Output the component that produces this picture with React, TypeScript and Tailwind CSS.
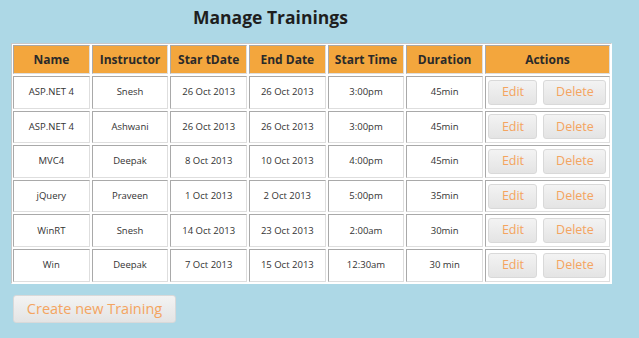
const TRAININGS = [
  { name: "ASP.NET 4", instructor: "Snesh", start: "26 Oct 2013", end: "26 Oct 2013", time: "3:00pm", duration: "45min" },
  { name: "ASP.NET 4", instructor: "Ashwani", start: "26 Oct 2013", end: "26 Oct 2013", time: "3:00pm", duration: "45min" },
  { name: "MVC4", instructor: "Deepak", start: "8 Oct 2013", end: "10 Oct 2013", time: "4:00pm", duration: "45min" },
  { name: "jQuery", instructor: "Praveen", start: "1 Oct 2013", end: "2 Oct 2013", time: "5:00pm", duration: "35min" },
  { name: "WinRT", instructor: "Snesh", start: "14 Oct 2013", end: "23 Oct 2013", time: "2:00am", duration: "30min" },
  { name: "Win", instructor: "Deepak", start: "7 Oct 2013", end: "15 Oct 2013", time: "12:30am", duration: "30 min" },
];

const HEADERS = ["Name", "Instructor", "Star tDate", "End Date", "Start Time", "Duration", "Actions"];

const cell =
  "flex items-center justify-center border border-t-[#a9a9a9] border-l-[#a9a9a9] border-b-[#dedede] border-r-[#dedede]";

function GreyButton({ label, className = "" }: { label: string; className?: string }) {
  return (
    <button
      type="button"
      className={`rounded-[3px] border border-[#d9d9d9] bg-gradient-to-b from-[#f3f3f3] to-[#e4e4e4] text-[#f4a460] ${className}`}
    >
      {label}
    </button>
  );
}

export default function App() {
  return (
    <div className="min-h-screen bg-[#add8e6] pl-[11px] font-['Open_Sans',sans-serif]">
      {/* Title */}
      <h1 className="ml-[182px] pt-[7px] text-[17.5px] font-bold leading-[20px] text-[#1e1e1e]">
        Manage Trainings
      </h1>

      {/* Table */}
      <div className="mt-[16px] grid w-[601px] grid-cols-[repeat(6,1fr)_125px] gap-[2px] border border-t-[#c8c8c8] border-l-[#c8c8c8] border-b-white border-r-white bg-white p-[1px]">
        {HEADERS.map((h) => (
          <div key={h} className={`${cell} h-[29px] bg-[#f3a63d] text-[12px] font-bold text-[#2a2a2a]`}>
            {h}
          </div>
        ))}
        {TRAININGS.map((t, i) => (
          <div key={i} className="contents">
            {[t.name, t.instructor, t.start, t.end, t.time, t.duration].map((v, j) => (
              <div key={j} className={`${cell} h-[32.6px] text-[9.5px] text-[#333]`}>
                {v}
              </div>
            ))}
            <div className={`${cell} h-[32.6px] gap-[6px]`}>
              <GreyButton label="Edit" className="h-[25px] w-[49px] text-[12.5px]" />
              <GreyButton label="Delete" className="h-[25px] w-[63px] text-[12.5px]" />
            </div>
          </div>
        ))}
      </div>

      {/* Create */}
      <GreyButton
        label="Create new Training"
        className="mt-[11px] ml-[2px] h-[28px] w-[163px] text-[14.5px]"
      />
    </div>
  );
}
